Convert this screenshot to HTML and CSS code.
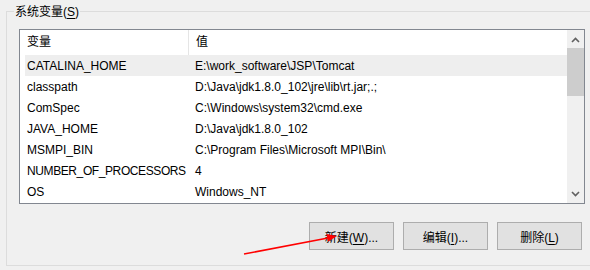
FILE: index.html
```html
<!DOCTYPE html>
<html>
<head>
<meta charset="utf-8">
<title>环境变量</title>
<link rel="stylesheet" href="styles.css">
</head>
<body>
<div class="panel">
  <span class="panel-title">系统变量(<u>S</u>)</span>

  <div class="list">
    <div class="list-body">
      <div class="list-head">
        <div class="cell">变量</div>
        <div class="cell sep">值</div>
      </div>
      <div class="row selected"><div class="cell">CATALINA_HOME</div><div class="cell">E:\work_software\JSP\Tomcat</div></div>
      <div class="row"><div class="cell">classpath</div><div class="cell">D:\Java\jdk1.8.0_102\jre\lib\rt.jar;.;</div></div>
      <div class="row"><div class="cell">ComSpec</div><div class="cell">C:\Windows\system32\cmd.exe</div></div>
      <div class="row"><div class="cell">JAVA_HOME</div><div class="cell">D:\Java\jdk1.8.0_102</div></div>
      <div class="row"><div class="cell">MSMPI_BIN</div><div class="cell">C:\Program Files\Microsoft MPI\Bin\</div></div>
      <div class="row"><div class="cell tight">NUMBER_OF_PROCESSORS</div><div class="cell">4</div></div>
      <div class="row"><div class="cell">OS</div><div class="cell">Windows_NT</div></div>
    </div>
    <div class="scrollbar">
      <div class="sb-btn">
        <svg width="9" height="6" viewBox="0 0 9 6"><path d="M1 5 L4.5 1.5 L8 5" fill="none" stroke="#606060" stroke-width="1.6"/></svg>
      </div>
      <div class="sb-thumb"></div>
      <div class="sb-track"></div>
      <div class="sb-btn">
        <svg width="9" height="6" viewBox="0 0 9 6"><path d="M1 1 L4.5 4.5 L8 1" fill="none" stroke="#606060" stroke-width="1.6"/></svg>
      </div>
    </div>
  </div>

  <div class="buttons">
    <button class="btn">新建(<u>W</u>)...</button>
    <button class="btn">编辑(<u>I</u>)...</button>
    <button class="btn">删除(<u>L</u>)</button>
  </div>

  <svg class="pointer" width="115" height="35" viewBox="0 0 115 35">
    <line x1="14" y1="29" x2="98" y2="13" stroke="#ff0000" stroke-width="1.6"/>
    <polygon points="107,11 98,16.8 96.4,9" fill="#ff0000"/>
  </svg>
</div>
</body>
</html>
```

FILE: styles.css
```css
body {
  margin: 0;
  background: #f0f0f0;
  font-family: "Liberation Sans", "Noto Sans CJK SC", sans-serif;
  font-size: 12px;
  color: #000;
}

.panel {
  position: relative;
  margin: 11px 0 0 6px;
  height: 236px;
  padding: 17px 0 0 12px;
  border: 1px solid #dcdcdc;
  border-right: none;
}

.panel-title {
  position: absolute;
  top: -8px;
  left: 7px;
  padding: 0 1px;
  line-height: 16px;
  background: #f0f0f0;
}

u { text-decoration-thickness: 1px; text-underline-offset: 2px; }

/* list view */
.list {
  display: flex;
  width: 564px;
  height: 173px;
  border: 1px solid #828790;
  background: #fff;
}

.list-body {
  flex: 1;
  overflow: hidden;
}

.list-head,
.row {
  display: grid;
  grid-template-columns: 163px 1fr;
  margin-left: 5px;
  white-space: nowrap;
}

.list-head { height: 25px; line-height: 25px; margin-left: 0; padding-left: 5px; }

.row { height: 21px; line-height: 22px; }

.row.selected { background: #eeeeee; }

.cell { padding-left: 2px; }

.cell + .cell { padding-left: 7px; }

.cell.tight { letter-spacing: -0.4px; }

.sep { border-left: 1px solid #e5e5e5; padding-left: 6px; }

/* scrollbar */
.scrollbar {
  width: 17px;
  display: flex;
  flex-direction: column;
  background: #f0f0f0;
}

.sb-btn {
  height: 18px;
  display: flex;
  align-items: center;
  justify-content: center;
}

.sb-btn:first-child { padding-top: 1px; height: 17px; }

.sb-thumb {
  height: 48px;
  background: #cdcdcd;
}

.sb-track { flex: 1; }

/* buttons */
.buttons {
  display: flex;
  justify-content: flex-end;
  gap: 9px;
  width: 563px;
  margin-top: 18px;
}

.btn {
  width: 85px;
  height: 28px;
  padding: 0;
  background: #e1e1e1;
  border: 1px solid #adadad;
  font: inherit;
  color: #000;
}

.pointer {
  position: absolute;
  left: 223px;
  top: 213px;
}
```
